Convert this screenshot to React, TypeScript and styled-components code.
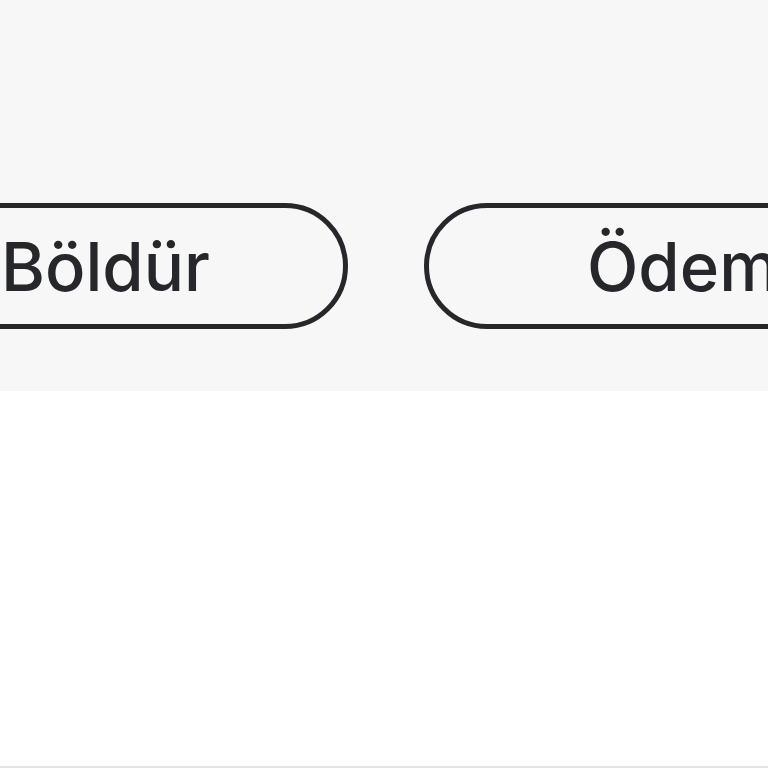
import React from 'react';
import styled, { createGlobalStyle } from 'styled-components';

const Global = createGlobalStyle`
  html, body {
    margin: 0;
    padding: 0;
    background: #ffffff;
    overflow: hidden;
  }
  body {
    font-family: Inter, "Noto Sans", sans-serif;
  }
`;

const Page = styled.div`
  width: 768px;
  height: 768px;
  display: flex;
  flex-direction: column;
  overflow: hidden;
  border-bottom: 2px solid #e4e4e6;
  box-sizing: border-box;
`;

const Band = styled.section`
  height: 391px;
  background: #f7f7f8;
  padding-top: 203px;
  box-sizing: border-box;
`;

const Row = styled.div`
  display: flex;
  gap: 76px;
  margin-left: -132px;
`;

const Pill = styled.button<{ $align: 'start' | 'end'; $pad: number }>`
  flex: 0 0 480px;
  height: 126px;
  box-sizing: border-box;
  border: 5px solid #25272b;
  border-radius: 63px;
  background: transparent;
  display: flex;
  align-items: center;
  justify-content: ${p => (p.$align === 'end' ? 'flex-end' : 'flex-start')};
  padding: ${p => (p.$align === 'end' ? `0 ${p.$pad}px 0 0` : `0 0 0 ${p.$pad}px`)};
  font-family: Inter, "Noto Sans", sans-serif;
  font-size: 67px;
  font-weight: 500;
  color: #25272b;
  white-space: nowrap;
  cursor: pointer;
`;

const Rest = styled.div`
  flex: 1;
  background: #ffffff;
`;

export default function App() {
  return (
    <>
      <Global />
      <Page>
        <Band>
          <Row>
            <Pill $align="end" $pad={133}>Böldür</Pill>
            <Pill $align="start" $pad={158}>Ödeme</Pill>
          </Row>
        </Band>
        <Rest />
      </Page>
    </>
  );
}
